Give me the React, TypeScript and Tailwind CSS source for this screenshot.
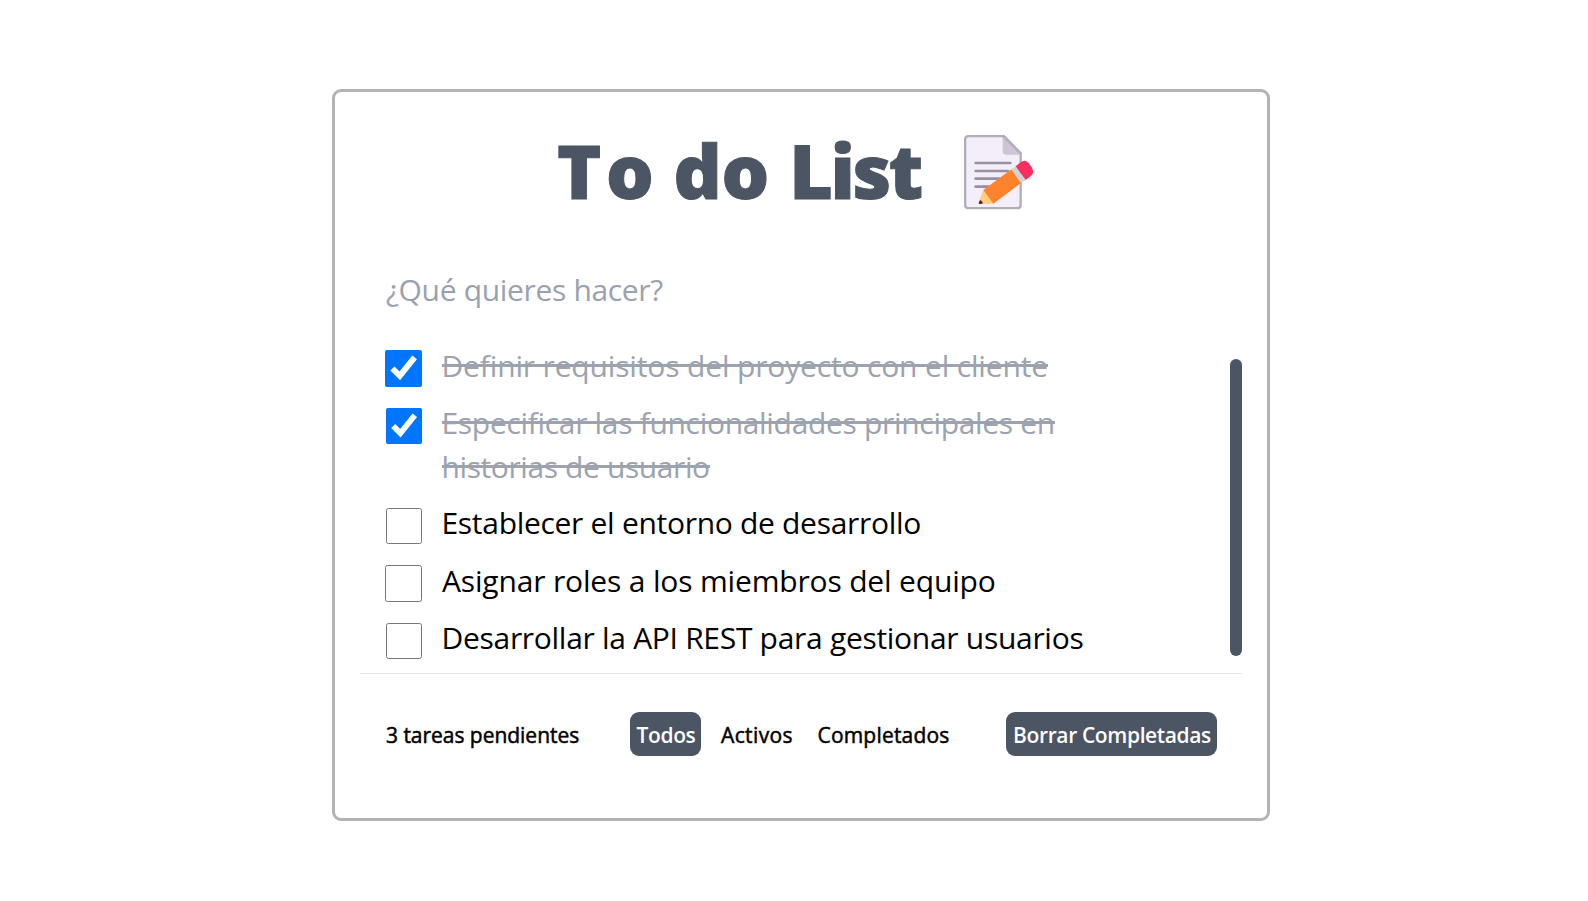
type Line = { text: string; tracking: string };
type Todo = { lines: Line[]; done: boolean; box: string; row: string };

const todos: Todo[] = [
  {
    lines: [{ text: "Definir requisitos del proyecto con el cliente", tracking: "indent-[-0.5px] tracking-[-0.155px]" }],
    done: true,
    box: "ml-[-1px] mr-[20px] size-[37px]",
    row: "h-[57px]",
  },
  {
    lines: [
      { text: "Especificar las funcionalidades principales en", tracking: "indent-[-0.5px] tracking-[-0.315px]" },
      { text: "historias de usuario", tracking: "indent-[-0.5px] tracking-[-0.4px]" },
    ],
    done: true,
    box: "mt-px mr-5 size-9",
    row: "h-[100px]",
  },
  {
    lines: [{ text: "Establecer el entorno de desarrollo", tracking: "indent-[-0.5px] tracking-[-0.3px]" }],
    done: false,
    box: "mt-px mr-5 size-9",
    row: "h-[58px]",
  },
  {
    lines: [{ text: "Asignar roles a los miembros del equipo", tracking: "tracking-[-0.165px]" }],
    done: false,
    box: "ml-[-1px] mr-[20px] size-[37px]",
    row: "h-[57px]",
  },
  {
    lines: [{ text: "Desarrollar la API REST para gestionar usuarios", tracking: "indent-[-0.5px] tracking-[-0.295px]" }],
    done: false,
    box: "mt-px mr-5 size-9",
    row: "h-[58px]",
  },
];

function MemoIcon() {
  return (
    <svg className="h-[75px] w-[70px]" viewBox="73 43 210 225" fill="none">
      <path
        d="M86 46.500H192L243 98V252Q243 262.500 233 262.500H86Q76.500 262.500 76.500 253V56Q76.500 46.500 86 46.500Z"
        fill="#f3eef8"
        stroke="#b4acbc"
        strokeWidth="7"
        strokeLinejoin="round"
      />
      <path d="M189 48L246 102H199Q189 102 189 92Z" fill="#cdc4d6" />
      <path d="M192 46.500L243 98" stroke="#b4acbc" strokeWidth="7" strokeLinecap="round" />
      <path d="M108 127H212M108 151H205M108 174H178M108 198H150" stroke="#998ea4" strokeWidth="8" strokeLinecap="round" />
      <path d="M131 208L118 243Q116 252 125 250L161 249L148 222Z" fill="#ffce7c" />
      <path d="M121 238L117 247Q117 251 122 250L130 248Q128 240 121 238Z" fill="#402a32" />
      <path d="M215 146L244 187L161 249L131 208Z" fill="#ff822d" />
      <path d="M228 137L258 178L244 187L215 146Z" fill="#d3d3d3" />
      <path d="M228 137L243 125Q257 114 269 129L276 140Q286 155 274 166L258 178Z" fill="#f92f60" />
    </svg>
  );
}

export default function App() {
  return (
    <main className="flex h-[901px] justify-center bg-white pt-[89px] font-['Open_Sans',sans-serif] text-black">
      <section className="ml-[14px] h-[732px] w-[938px] rounded-[9px] border-[3px] border-[#b3b3b3] px-[25px]">
        <header className="flex h-[150px] items-start justify-center pt-[42.5px] pr-[11px]">
          <h1 className="mt-[-14.5px] mr-[43px] text-[75px] leading-[100px] font-extrabold tracking-[-0.3px] whitespace-nowrap text-[#4b5563] [-webkit-text-stroke:1px_currentColor]">
            <span className="tracking-[4.5px]">T</span>o <span className="ml-[1px]">do</span>{" "}
            <span className="ml-[1px] tracking-[-2.4px]">List</span>
          </h1>
          <MemoIcon />
        </header>
        <input
          className="block h-[94px] w-full pl-[26px] text-[30px] tracking-[-0.33px] outline-none placeholder:text-gray-400"
          placeholder="¿Qué quieres hacer?"
        />
        <div className="flex h-[338px] justify-between border-b border-[#e5e7eb] pl-[26px]">
          <ul className="pt-[7px]">
            {todos.map((todo) => (
              <li key={todo.lines[0].text} className={`flex items-start ${todo.row}`}>
                <span className="flex pt-[7px]">
                  <input type="checkbox" defaultChecked={todo.done} className={todo.box} />
                </span>
                <p className="pt-px text-[30px] leading-[44px] whitespace-nowrap">
                  {todo.lines.map((line) => (
                    <span
                      key={line.text}
                      className={`block w-fit ${line.tracking} ${
                        todo.done
                          ? "bg-[linear-gradient(#9ca3af,#9ca3af)] bg-[length:100%_3px] bg-[position:0_20px] bg-no-repeat text-[#9ca3af]"
                          : ""
                      }`}
                    >
                      {line.text}
                    </span>
                  ))}
                </p>
              </li>
            ))}
          </ul>
          <div className="mt-[23px] h-[297px] w-3 rounded-full bg-[#4b5563]" />
        </div>
        <footer className="mt-[38px] flex h-11 items-stretch pr-[25px] pl-[26px] text-[21px] leading-[42px] whitespace-nowrap">
          <span className="w-[244px] pt-[2px] tracking-[-0.03px] [-webkit-text-stroke:0.5px_currentColor]">
            3 tareas pendientes
          </span>
          <nav className="flex gap-[13px]">
            <button className="w-[71px] rounded-[9px] bg-[#4b5563] pt-[2px] pl-px font-semibold tracking-[-0.4px] text-white">
              Todos
            </button>
            <button className="w-[84px] pt-[2px] pl-[2px] tracking-[0.4px] [-webkit-text-stroke:0.5px_currentColor]">
              Activos
            </button>
            <button className="w-[145px] pt-[2px] tracking-[0.2px] [-webkit-text-stroke:0.5px_currentColor]">
              Completados
            </button>
          </nav>
          <button className="ml-auto w-[211px] rounded-[9px] bg-[#4b5563] pt-[2px] pl-px font-semibold tracking-[-0.38px] text-white">
            Borrar Completadas
          </button>
        </footer>
      </section>
    </main>
  );
}
